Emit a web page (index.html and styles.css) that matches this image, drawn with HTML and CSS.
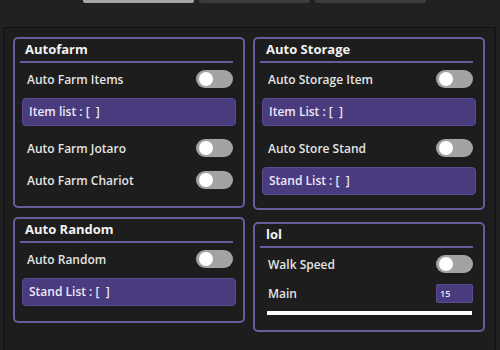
FILE: index.html
```html
<!DOCTYPE html>
<html lang="en">
<head>
    <meta charset="UTF-8">
    <title>Hub</title>
    <link rel="stylesheet" href="styles.css">
</head>
<body>
<div class="tabs">
    <div class="tab current"></div>
    <div class="tab"></div>
    <div class="tab"></div>
</div>
<div class="main">
    <div class="col">
        <div class="section">
            <div class="title">Autofarm</div>
            <div class="line"></div>
            <div class="row"><span>Auto Farm Items</span><div class="toggle"></div></div>
            <div class="list">Item list : [&nbsp;&nbsp;]</div>
            <div class="row"><span>Auto Farm Jotaro</span><div class="toggle"></div></div>
            <div class="row"><span>Auto Farm Chariot</span><div class="toggle"></div></div>
        </div>
        <div class="section random">
            <div class="title">Auto Random</div>
            <div class="line"></div>
            <div class="row"><span>Auto Random</span><div class="toggle"></div></div>
            <div class="list">Stand List : [&nbsp;&nbsp;]</div>
        </div>
    </div>
    <div class="col right">
        <div class="section">
            <div class="title">Auto Storage</div>
            <div class="line"></div>
            <div class="row"><span>Auto Storage Item</span><div class="toggle"></div></div>
            <div class="list">Item List : [&nbsp;&nbsp;]</div>
            <div class="row"><span>Auto Store Stand</span><div class="toggle"></div></div>
            <div class="list">Stand List : [&nbsp;&nbsp;]</div>
        </div>
        <div class="section lol">
            <div class="title">lol</div>
            <div class="line"></div>
            <div class="row"><span>Walk Speed</span><div class="toggle"></div></div>
            <div class="row small"><span>Main</span><div class="num">15</div></div>
            <div class="slider"></div>
        </div>
    </div>
</div>
</body>
</html>
```

FILE: styles.css
```css
* {
    padding: 0;
    margin: 0;
    box-sizing: border-box;
}

body {
    background: #212121;
    font-family: "Open Sans", "Noto Sans", sans-serif;
    color: #e4e4e4;
    width: 500px;
    height: 350px;
    overflow: hidden;
}

.tabs {
    display: flex;
    gap: 5px;
    padding-left: 83px;
    height: 27px;
}

.tab {
    width: 111px;
    height: 3px;
    background: #3c3c3c;
    border-radius: 0 0 2px 2px;
}

.tab.current {
    background: #a6a6a6;
}

.main {
    margin-left: 3px;
    width: 493px;
    height: 330px;
    background: #1d1d1d;
    border: 1px solid #111;
    padding: 9px;
    display: grid;
    grid-template-columns: 232px 232px;
    column-gap: 8px;
    align-items: start;
}

.col {
    display: flex;
    flex-direction: column;
    gap: 9px;
}

.col.right {
    gap: 12px;
}

.section {
    border: 2px solid #6a5b9c;
    border-radius: 5px;
    padding: 1px 0 13px;
    display: flex;
    flex-direction: column;
    gap: 6px;
}

.title {
    height: 18px;
    line-height: 18px;
    padding-left: 10px;
    font-size: 13px;
    font-weight: 700;
    color: #f2f2f2;
}

.right .title {
    padding-left: 11px;
}

.line {
    height: 2px;
    background: #6a5b9c;
    margin: -3px 10px 0 5px;
}

.row {
    height: 26px;
    display: flex;
    align-items: center;
    justify-content: space-between;
    padding: 0 10px 0 12px;
    font-size: 12px;
    font-weight: 600;
}

.right .row {
    padding-left: 13px;
}

.section .line + .row {
    margin-top: -3px;
}

.toggle {
    width: 37px;
    height: 18px;
    border-radius: 9px;
    background: #a3a3a3;
    position: relative;
}

.toggle::after {
    content: "";
    position: absolute;
    left: 3px;
    top: 2px;
    width: 14px;
    height: 14px;
    border-radius: 50%;
    background: #fff;
}

.list {
    height: 28px;
    line-height: 26px;
    margin: 0 7px 3px 7px;
    background: #4a3b7f;
    border: 1px solid #5b4c92;
    border-radius: 4px;
    padding-left: 6px;
    font-size: 12px;
    font-weight: 600;
    color: #ece9f4;
}

.section .list:last-child {
    margin-bottom: 0;
}

.row.small {
    height: 20px;
}

.num {
    width: 37px;
    height: 19px;
    background: #4a3b7f;
    border: 1px solid #5b4c92;
    border-radius: 2px;
    font-size: 9px;
    line-height: 17px;
    padding-left: 3px;
    color: #e8e6f0;
}

.slider {
    height: 4px;
    background: #fff;
    margin: 2px 11px 0 12px;
}

.random {
    padding-bottom: 15px;
}

.lol {
    padding-bottom: 15px;
}
```
